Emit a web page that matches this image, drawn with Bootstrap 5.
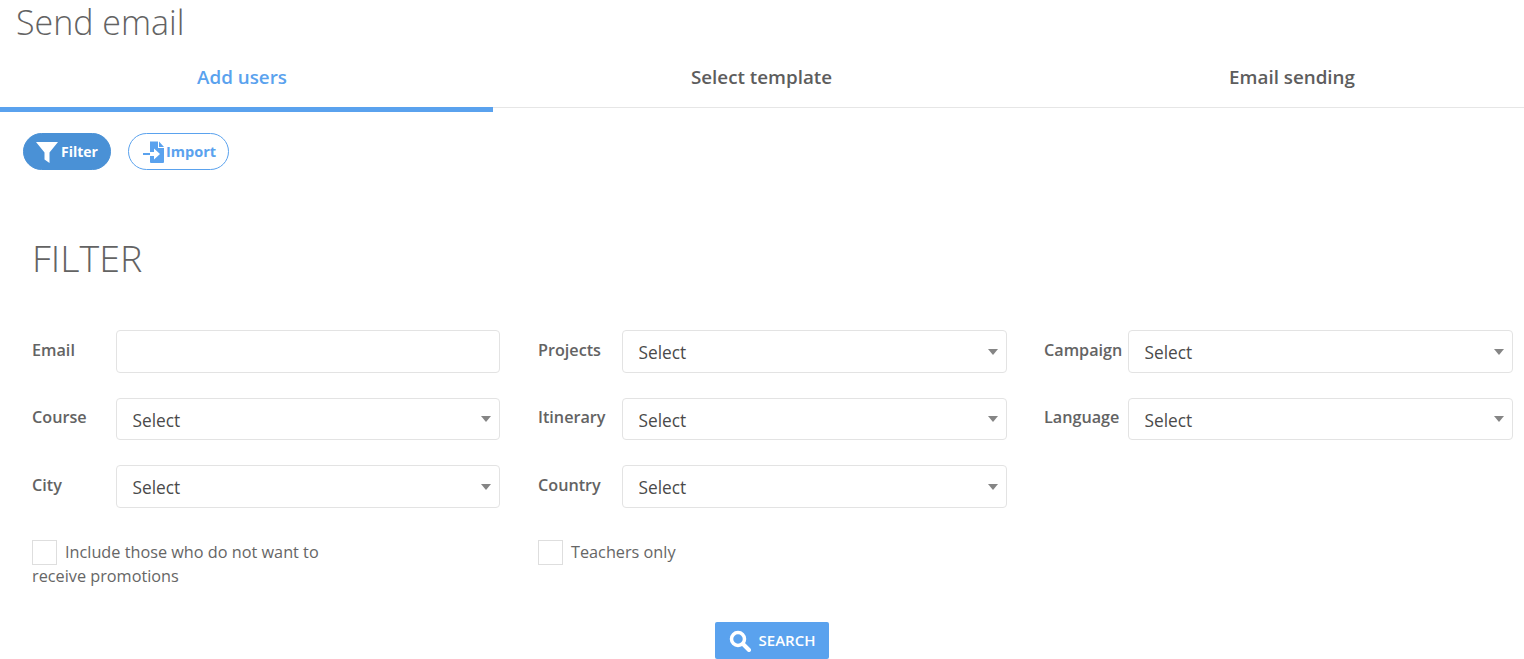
<!DOCTYPE html>
<html lang="en"><head><meta charset="utf-8"><title>Send email</title>
<link href="https://cdn.jsdelivr.net/npm/bootstrap@5.3.0/dist/css/bootstrap.min.css" rel="stylesheet">
<style>
html,body{height:659px;overflow:hidden}
body{font-family:"Open Sans",sans-serif;color:#636363;background:#fff}
.page-title{font-family:"Open Sans",sans-serif;font-weight:300;font-size:34px;line-height:44px;color:#636363;margin:0 0 0 16px}
.step-tabs{display:grid;grid-template-columns:493px 537px 494px;border-bottom:1px solid #e6e6e6;height:64px}
.step-tab{display:block;text-align:center;font-size:18.8px;font-weight:600;color:#5d5d5d;text-decoration:none;line-height:24px;padding-top:21px;height:68px}
.step-tab.on{color:#5aa2ee;border-bottom:5px solid #5aa2ee;padding-right:9px}
.step-tab.last{padding-left:30px}
.action-row{padding:25px 0 0 23px;gap:17px}
.pill-act{height:37px;border-radius:19px;font-weight:700;display:flex;align-items:center;border:1px solid #4a91d6;line-height:1;padding:1px 12px 0}
.pill-act.solid{background:#4a91d6;color:#fff;width:88px;font-size:14px}
.pill-act.line{background:#fff;color:#5aa2ee;border-color:#5aa2ee;width:101px;font-size:14.5px}
.filter-head{font-family:"Open Sans",sans-serif;font-weight:300;font-size:37.5px;line-height:48px;color:#636363;margin:64px 0 48px 32px}
.filter-grid{display:grid;grid-template-columns:repeat(3,506px);padding-left:32px;row-gap:25px}
.fld{display:flex;align-items:flex-start;height:43px;width:469px}
.fld.short{height:42px}
.fld-label{width:84px;flex:none;font-size:16.2px;font-weight:600;color:#636363;line-height:20px;margin:10px 0 0;padding:0}
.fld.short .fld-label{margin-top:9px}
.fld-ctl.form-control,.fld-ctl.form-select{width:385px;height:100%;flex:none;border:1px solid #e3e3e3;border-radius:4px;font-size:17.3px;line-height:24px;color:#4a4a4a;padding:3px 30px 0 15.500px;box-shadow:none}
.fld-ctl.narrow{width:384px!important}
.fld-ctl.form-select{background-image:url("data:image/svg+xml,%3csvg xmlns='http://www.w3.org/2000/svg' viewBox='0 0 10 6'%3e%3cpath fill='%23858585' d='M0 0h10L5 6z'/%3e%3c/svg%3e");background-size:10px 6px;background-position:right 8px center;background-repeat:no-repeat}
.check-row{display:grid;grid-template-columns:repeat(2,506px);padding-left:32px;margin-top:32px}
.chk-text{font-size:16.25px;line-height:24px;color:#666;width:320px;margin:0}
.chk-box{float:left;width:25px;height:25px;border:1px solid #dedede;background:#fff;margin:0 8px -4px 0}
.search-go{display:flex;align-items:center;justify-content:center;gap:8px;width:114px;height:37px;padding:0;background:#5aa2ee;border:0;border-radius:2px;color:#fff;font-size:15px;font-weight:600;margin:0 auto}
.search-wrap{display:flex;justify-content:center;padding:34px 0 0 20px}
</style></head><body>
<h1 class="page-title">Send email</h1>
<nav class="step-tabs">
<a class="step-tab on" href="#">Add users</a>
<a class="step-tab" href="#">Select template</a>
<a class="step-tab last" href="#">Email sending</a>
</nav>
<div class="d-flex action-row">
<button class="pill-act solid" type="button"><svg width="24" height="24" viewBox="0 0 24 24" class="flex-shrink-0" style="margin:-1px 2px 0 -1px"><path fill="#fff" d="M1 2h22L14.500 12.500V23l-5-3.500v-7z"/></svg>Filter</button>
<button class="pill-act line" type="button"><svg width="24" height="24" viewBox="0 0 24 24" class="flex-shrink-0" style="margin:-1px 1px 0 0"><path fill="#5aa2ee" d="M9 1.500h8V8h6v14a1 1 0 0 1-1 1H10a1 1 0 0 1-1-1v-6h4v3.500l6-5.500-6-5.500V12H9zM18 1.500l5 5.500h-5z"/><path fill="#5aa2ee" d="M2 13h7v2H2z"/></svg>Import</button>
</div>
<h2 class="filter-head">FILTER</h2>
<form class="filter-grid">
<div class="fld"><label class="fld-label">Email</label><input class="form-control fld-ctl narrow" type="text"></div>
<div class="fld"><label class="fld-label">Projects</label><select class="form-select fld-ctl"><option>Select</option></select></div>
<div class="fld"><label class="fld-label">Campaign</label><select class="form-select fld-ctl"><option>Select</option></select></div>
<div class="fld short"><label class="fld-label">Course</label><select class="form-select fld-ctl narrow"><option>Select</option></select></div>
<div class="fld short"><label class="fld-label">Itinerary</label><select class="form-select fld-ctl"><option>Select</option></select></div>
<div class="fld short"><label class="fld-label">Language</label><select class="form-select fld-ctl"><option>Select</option></select></div>
<div class="fld"><label class="fld-label">City</label><select class="form-select fld-ctl narrow"><option>Select</option></select></div>
<div class="fld"><label class="fld-label">Country</label><select class="form-select fld-ctl"><option>Select</option></select></div>
</form>
<div class="check-row">
<p class="chk-text"><span class="chk-box"></span>Include those who do not want to receive promotions</p>
<p class="chk-text"><span class="chk-box"></span>Teachers only</p>
</div>
<div class="search-wrap"><button class="search-go" type="button"><svg width="22" height="22" viewBox="0 0 22 22"><circle cx="9" cy="9" r="6.500" fill="none" stroke="#fff" stroke-width="3.500"/><path d="M14 14l6 6" stroke="#fff" stroke-width="4" stroke-linecap="round"/></svg>SEARCH</button></div>
</body></html>
